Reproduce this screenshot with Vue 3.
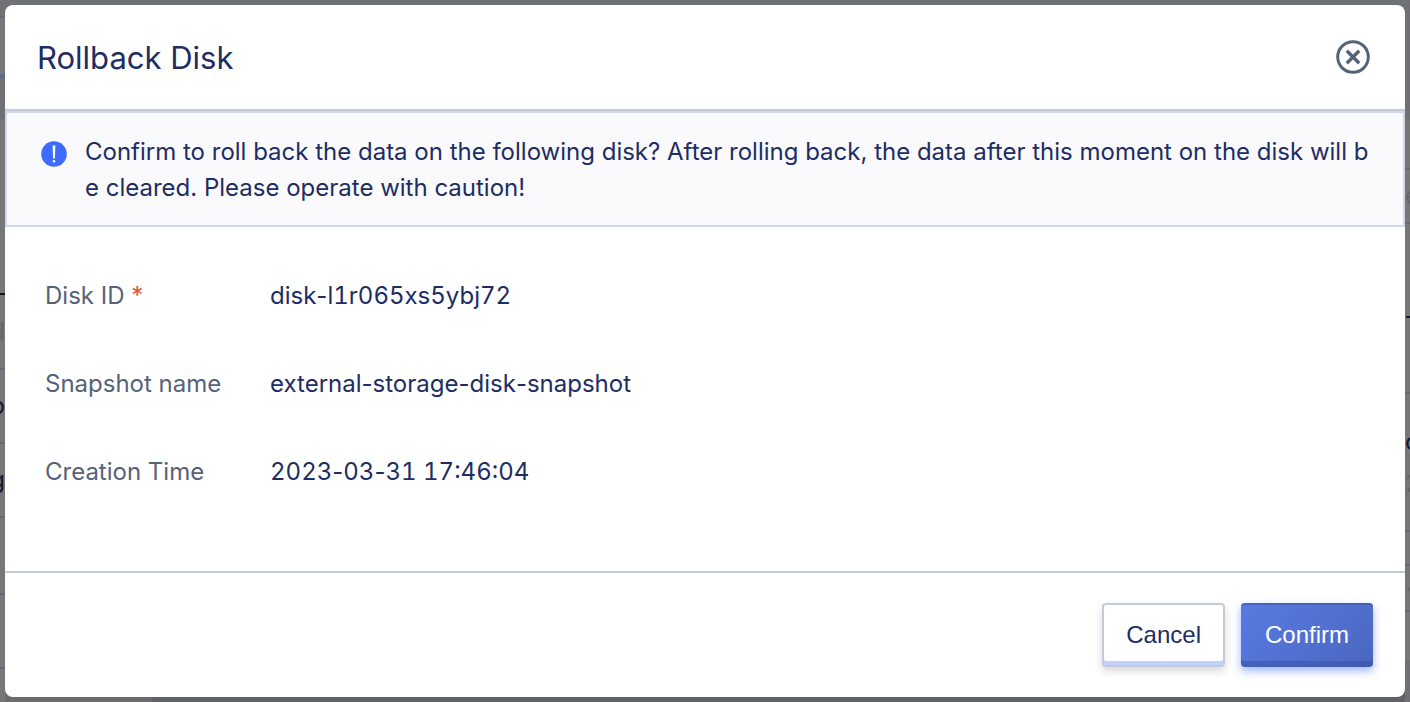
<script setup>
const notice =
  'Confirm to roll back the data on the following disk? After rolling back, the data after this moment on the disk will be cleared. Please operate with caution!'

const fields = [
  { label: 'Disk ID', value: 'disk-l1r065xs5ybj72', required: true },
  { label: 'Snapshot name', value: 'external-storage-disk-snapshot' },
  { label: 'Creation Time', value: '2023-03-31 17:46:04' },
]

// Digits are set in equal widths, hyphens keep their own width.
const parts = (value) => value.split(/(-)/)

const leftRows = [
  { height: 18, kind: 'bar' },
  { height: 60, kind: 'tab' },
  { height: 42, kind: 'bar plain' },
  { height: 175, kind: 'strong' },
  { height: 75, text: 'd', kind: 'faint' },
  { height: 74, text: 'p' },
  { height: 74, text: 'g' },
  { height: 77 },
  { height: 74 },
]

const rightRows = [
  { height: 120, kind: 'bar plain' },
  { height: 50 },
  { height: 54, text: 'e', kind: 'faint' },
  { height: 84, kind: 'plain' },
  { height: 36, text: 'T', kind: 'plain' },
  { height: 50 },
  { height: 30, kind: 'plain' },
  { height: 36, text: 'c', kind: 'plain' },
  { height: 48, text: '2', kind: 'plain faint' },
  { height: 24 },
  { height: 34 },
  { height: 46, text: '<', kind: 'faint' },
  { height: 48, kind: 'plain' },
  { height: 42, kind: 'bar plain' },
]
</script>

<template>
  <div class="page">
    <div class="backdrop" aria-hidden="true">
      <div class="edge left">
        <div v-for="(r, i) in leftRows" :key="i" class="row" :class="r.kind" :style="{ height: r.height + 'px' }">{{ r.text }}</div>
      </div>
      <div class="floor"></div>
      <div class="edge right">
        <div v-for="(r, i) in rightRows" :key="i" class="row" :class="r.kind" :style="{ height: r.height + 'px' }">{{ r.text }}</div>
      </div>
    </div>

    <section class="dialog" role="dialog" aria-modal="true" aria-labelledby="dialog-title">
      <header class="head">
        <h1 id="dialog-title">Rollback Disk</h1>
        <button class="close" type="button" aria-label="Close">
          <svg width="34" height="34" viewBox="0 0 34 34" fill="none" stroke="#56627a">
            <circle cx="17" cy="17" r="15.3" stroke-width="3" />
            <path d="M10.8 10.8 23.2 23.2M23.2 10.8 10.8 23.2" stroke-width="3.4" />
          </svg>
        </button>
      </header>

      <div class="notice" role="alert">
        <svg class="info" width="26" height="26" viewBox="0 0 26 26">
          <circle cx="13" cy="13" r="12.8" fill="#3d6bff" />
          <path d="M11.6 4.5h2.8L13.9 17.5h-1.8z" fill="#fff" />
          <circle cx="13" cy="20.2" r="1.3" fill="#fff" />
        </svg>
        <p>{{ notice }}</p>
      </div>

      <dl class="fields">
        <div v-for="f in fields" :key="f.label" class="field">
          <dt>{{ f.label }} <span v-if="f.required" class="star">*</span></dt>
          <dd><span v-for="(p, i) in parts(f.value)" :key="i" :class="{ tabular: p !== '-' }">{{ p }}</span></dd>
        </div>
      </dl>

      <footer class="foot">
        <button class="btn cancel" type="button">Cancel</button>
        <button class="btn confirm" type="button">Confirm</button>
      </footer>
    </section>
  </div>
</template>

<style>
body {
  margin: 0;
  background: #707175;
}
</style>

<style scoped>
.page {
  position: relative;
  box-sizing: border-box;
  min-height: 100vh;
  padding: 5px;
  display: flex;
  overflow: hidden;
  font-family: Inter, "Liberation Sans", sans-serif;
  font-size: 24px;
  line-height: 36px;
  color: #202d63;
}
.backdrop {
  position: absolute;
  inset: 0;
  display: flex;
  align-items: stretch;
}
.edge {
  width: 5px;
  overflow: hidden;
  background: #777;
}
.row {
  box-sizing: border-box;
  display: flex;
  align-items: center;
  border-bottom: 2px solid #666774;
  color: #121831;
}
.left .row {
  justify-content: flex-end;
}
.right .row {
  border-color: #686870;
}
.row.bar {
  background: #707175;
}
.row.tab {
  border-bottom: 4px solid #5f6884;
}
.row.strong {
  border-color: #10152c;
}
.row.faint {
  color: #666;
}
.row.plain {
  border: 0;
}
.floor {
  flex: 1;
  background: linear-gradient(90deg, #6c6c6d 147px, #616266 147px);
  margin-top: 18px;
}
.dialog {
  position: relative;
  flex: 1;
  display: flex;
  flex-direction: column;
  border-radius: 8px;
  background: #fff;
  overflow: hidden;
}
.head {
  display: flex;
  align-items: center;
  justify-content: space-between;
  padding: 32px 35px 32px 32px;
  border-bottom: 2px solid #c5cada;
}
h1 {
  margin: 0;
  padding-top: 2px;
  font-size: 31px;
  font-weight: 400;
  line-height: 38px;
}
.close {
  display: flex;
  padding: 0;
  border: 0;
  background: none;
  cursor: pointer;
}
.notice {
  display: flex;
  gap: 18px;
  padding: 21px 32px 19px 34px;
  border: 2px solid #d2d6e9;
  background: #fafafd;
}
.info {
  flex: none;
  margin-top: 7px;
}
.notice p {
  margin: 0;
  word-break: break-all;
}
.fields {
  flex: 1;
  display: flex;
  flex-direction: column;
  gap: 52px;
  margin: 0;
  padding: 51px 40px 81px;
}
.field {
  display: flex;
}
dt {
  width: 225px;
  color: #56627a;
}
dd {
  margin: 0;
}
.tabular {
  font-variant-numeric: tabular-nums;
}
.star {
  color: #e8503a;
}
.foot {
  display: flex;
  justify-content: flex-end;
  gap: 16px;
  padding: 30px 32px;
  border-top: 2px solid #c5cada;
}
.btn {
  box-sizing: border-box;
  height: 64px;
  padding: 0 22px;
  border: 2px solid #c5cada;
  border-radius: 4px;
  font-family: "Liberation Sans", Arial, sans-serif;
  font-size: 24px;
  cursor: pointer;
}
.cancel {
  background: #fff;
  color: #202d63;
  box-shadow: inset 0 -4px #c3d2fb, 0 4px 8px rgba(0, 0, 0, 0.16);
}
.confirm {
  padding: 0 24px;
  border: 0;
  background: linear-gradient(135deg, #587be2, #4a67c0);
  color: #fff;
  box-shadow: inset 0 2px rgba(54, 80, 160, 0.5), inset 0 -6px rgba(54, 80, 160, 0.5), 0 4px 8px rgba(61, 107, 255, 0.5);
}
</style>
